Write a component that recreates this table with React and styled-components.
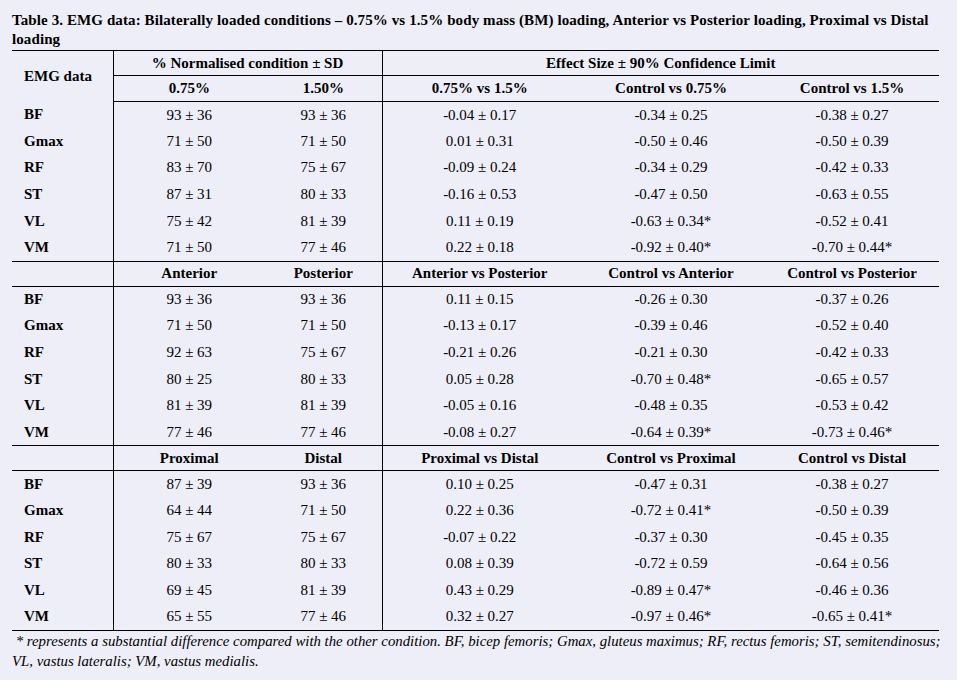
import styled, { createGlobalStyle } from 'styled-components';

const GlobalStyle = createGlobalStyle`
  html, body {
    margin: 0;
    padding: 0;
    background: #eeeef8;
  }
  body {
    font-family: 'Liberation Serif', 'Times New Roman', serif;
    color: #000;
  }
`;

const normalised = [
  { name: 'BF', a: '93 ± 36', b: '93 ± 36', c: '-0.04 ± 0.17', d: '-0.34 ± 0.25', e: '-0.38 ± 0.27' },
  { name: 'Gmax', a: '71 ± 50', b: '71 ± 50', c: '0.01 ± 0.31', d: '-0.50 ± 0.46', e: '-0.50 ± 0.39' },
  { name: 'RF', a: '83 ± 70', b: '75 ± 67', c: '-0.09 ± 0.24', d: '-0.34 ± 0.29', e: '-0.42 ± 0.33' },
  { name: 'ST', a: '87 ± 31', b: '80 ± 33', c: '-0.16 ± 0.53', d: '-0.47 ± 0.50', e: '-0.63 ± 0.55' },
  { name: 'VL', a: '75 ± 42', b: '81 ± 39', c: '0.11 ± 0.19', d: '-0.63 ± 0.34*', e: '-0.52 ± 0.41' },
  { name: 'VM', a: '71 ± 50', b: '77 ± 46', c: '0.22 ± 0.18', d: '-0.92 ± 0.40*', e: '-0.70 ± 0.44*' },
];

const anterior = [
  { name: 'BF', a: '93 ± 36', b: '93 ± 36', c: '0.11 ± 0.15', d: '-0.26 ± 0.30', e: '-0.37 ± 0.26' },
  { name: 'Gmax', a: '71 ± 50', b: '71 ± 50', c: '-0.13 ± 0.17', d: '-0.39 ± 0.46', e: '-0.52 ± 0.40' },
  { name: 'RF', a: '92 ± 63', b: '75 ± 67', c: '-0.21 ± 0.26', d: '-0.21 ± 0.30', e: '-0.42 ± 0.33' },
  { name: 'ST', a: '80 ± 25', b: '80 ± 33', c: '0.05 ± 0.28', d: '-0.70 ± 0.48*', e: '-0.65 ± 0.57' },
  { name: 'VL', a: '81 ± 39', b: '81 ± 39', c: '-0.05 ± 0.16', d: '-0.48 ± 0.35', e: '-0.53 ± 0.42' },
  { name: 'VM', a: '77 ± 46', b: '77 ± 46', c: '-0.08 ± 0.27', d: '-0.64 ± 0.39*', e: '-0.73 ± 0.46*' },
];

const proximal = [
  { name: 'BF', a: '87 ± 39', b: '93 ± 36', c: '0.10 ± 0.25', d: '-0.47 ± 0.31', e: '-0.38 ± 0.27' },
  { name: 'Gmax', a: '64 ± 44', b: '71 ± 50', c: '0.22 ± 0.36', d: '-0.72 ± 0.41*', e: '-0.50 ± 0.39' },
  { name: 'RF', a: '75 ± 67', b: '75 ± 67', c: '-0.07 ± 0.22', d: '-0.37 ± 0.30', e: '-0.45 ± 0.35' },
  { name: 'ST', a: '80 ± 33', b: '80 ± 33', c: '0.08 ± 0.39', d: '-0.72 ± 0.59', e: '-0.64 ± 0.56' },
  { name: 'VL', a: '69 ± 45', b: '81 ± 39', c: '0.43 ± 0.29', d: '-0.89 ± 0.47*', e: '-0.46 ± 0.36' },
  { name: 'VM', a: '65 ± 55', b: '77 ± 46', c: '0.32 ± 0.27', d: '-0.97 ± 0.46*', e: '-0.65 ± 0.41*' },
];

const firstHeads = ['0.75%', '1.50%', '0.75% vs 1.5%', 'Control vs 0.75%', 'Control vs 1.5%'];

const groups = [
  { rows: normalised },
  { heads: ['Anterior', 'Posterior', 'Anterior vs Posterior', 'Control vs Anterior', 'Control vs Posterior'], rows: anterior },
  { heads: ['Proximal', 'Distal', 'Proximal vs Distal', 'Control vs Proximal', 'Control vs Distal'], rows: proximal },
];

const Page = styled.div`
  padding: 11px 12px 0 12px;
  width: 927px;
`;

const Caption = styled.div`
  font-weight: bold;
  font-size: 15px;
  line-height: 19px;
  letter-spacing: 0.1px;
`;

const Table = styled.table`
  width: 927px;
  border-collapse: collapse;
  table-layout: fixed;
  margin-top: 1px;
  border-top: 1px solid #000;
  border-bottom: 1px solid #000;
  font-size: 15px;
`;

const HeadRow = styled.tr`
  height: ${(p) => p.$h || 25}px;
`;

const Head = styled.th`
  font-weight: bold;
  text-align: ${(p) => (p.$left ? 'left' : 'center')};
  padding: ${(p) => (p.$left ? '0 0 0 12px' : '0')};
  border-right: ${(p) => (p.$divider ? '1px solid #000' : 'none')};
  border-bottom: ${(p) => (p.$under ? '1px solid #000' : 'none')};
  border-top: ${(p) => (p.$over ? '1px solid #000' : 'none')};
  white-space: nowrap;
`;

const DataRow = styled.tr`
  height: 26.6px;
`;

const Name = styled.td`
  font-weight: bold;
  padding: 0 0 0 12px;
  border-right: 1px solid #000;
`;

const Cell = styled.td`
  text-align: center;
  padding: 0;
  border-right: ${(p) => (p.$divider ? '1px solid #000' : 'none')};
  white-space: nowrap;
`;

const Note = styled.div`
  font-style: italic;
  font-size: 14.8px;
  line-height: 20px;
  white-space: nowrap;
`;

const Group = ({ heads, rows }) => (
  <tbody>
    {heads && (
      <HeadRow>
        <Head $divider $over $under />
        {heads.map((h, i) => (
          <Head key={h} $divider={i === 1} $under $over>
            {h}
          </Head>
        ))}
      </HeadRow>
    )}
    {rows.map((r) => (
      <DataRow key={r.name}>
        <Name>{r.name}</Name>
        <Cell>{r.a}</Cell>
        <Cell $divider>{r.b}</Cell>
        <Cell>{r.c}</Cell>
        <Cell>{r.d}</Cell>
        <Cell>{r.e}</Cell>
      </DataRow>
    ))}
  </tbody>
);

const App = () => (
  <>
    <GlobalStyle />
    <Page>
      <Caption>
        Table 3. EMG data: Bilaterally loaded conditions – 0.75% vs 1.5% body mass (BM) loading, Anterior vs Posterior
        loading, Proximal vs Distal
        <br />
        loading
      </Caption>
      <Table>
        <colgroup>
          <col style={{ width: 101 }} />
          <col style={{ width: 152 }} />
          <col style={{ width: 117 }} />
          <col style={{ width: 195 }} />
          <col style={{ width: 188 }} />
          <col style={{ width: 174 }} />
        </colgroup>
        <thead>
          <HeadRow $h={25}>
            <Head $left $divider rowSpan={2}>
              EMG data
            </Head>
            <Head colSpan={2} $divider $under>
              % Normalised condition ± SD
            </Head>
            <Head colSpan={3} $under>
              Effect Size ± 90% Confidence Limit
            </Head>
          </HeadRow>
          <HeadRow $h={26}>
            {firstHeads.map((h, i) => (
              <Head key={h} $divider={i === 1} $under>
                {h}
              </Head>
            ))}
          </HeadRow>
        </thead>
        {groups.map((g, i) => (
          <Group key={i} {...g} />
        ))}
      </Table>
      <Note>
        &nbsp;* represents a substantial difference compared with the other condition. BF, bicep femoris; Gmax, gluteus
        maximus; RF, rectus femoris; ST, semitendinosus;
        <br />
        VL, vastus lateralis; VM, vastus medialis.
      </Note>
    </Page>
  </>
);

export default App;
